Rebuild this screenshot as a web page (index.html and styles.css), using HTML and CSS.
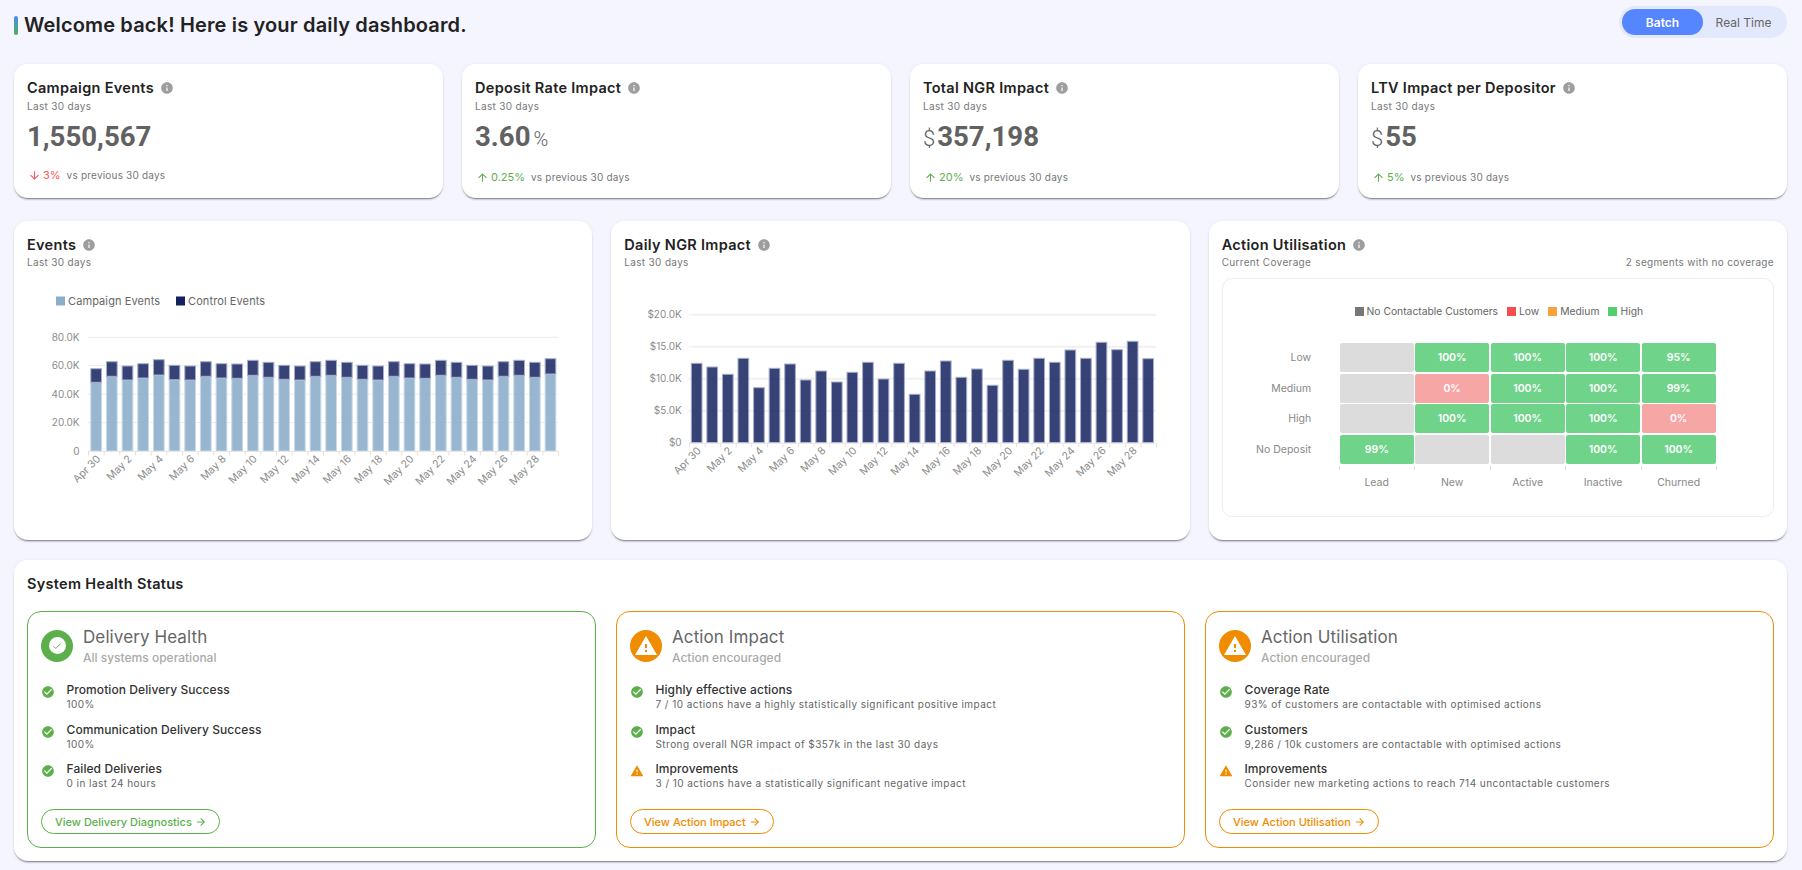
FILE: index.html
```html
<!DOCTYPE html>
<html lang="en">
<head>
<meta charset="utf-8">
<title>Dashboard</title>
<link rel="stylesheet" href="styles.css">
</head>
<body>
<svg class="defs">
  <symbol id="i-info" viewBox="0 0 24 24"><path d="M12 2C6.48 2 2 6.48 2 12s4.48 10 10 10 10-4.48 10-10S17.52 2 12 2zm1 15h-2v-6h2v6zm0-8h-2V7h2v2z"/></symbol>
  <symbol id="i-check" viewBox="0 0 24 24"><path d="M12 2C6.48 2 2 6.48 2 12s4.48 10 10 10 10-4.48 10-10S17.52 2 12 2zm-2 15l-5-5 1.41-1.41L10 14.17l7.59-7.59L19 8l-9 9z"/></symbol>
  <symbol id="i-warn" viewBox="0 0 24 24"><path d="M1 21h22L12 2 1 21zm12-3h-2v-2h2v2zm0-4h-2v-4h2v4z"/></symbol>
  <symbol id="i-up" viewBox="0 0 24 24"><path d="M4 12l1.41 1.41L11 7.83V20h2V7.83l5.58 5.59L20 12l-8-8-8 8z"/></symbol>
  <symbol id="i-down" viewBox="0 0 24 24"><path d="M20 12l-1.41-1.41L13 16.17V4h-2v12.17l-5.58-5.59L4 12l8 8 8-8z"/></symbol>
  <symbol id="i-right" viewBox="0 0 24 24"><path d="M12 4l-1.41 1.41L16.17 11H4v2h12.17l-5.58 5.59L12 20l8-8z"/></symbol>
</svg>
<main class="page">
  <header class="top">
    <h1 class="welcome"><span class="accent"></span>Welcome back! Here is your daily dashboard.</h1>
    <div class="toggle"><span class="toggle-on">Batch</span><span class="toggle-off">Real Time</span></div>
  </header>

  <section class="kpis">
    <article class="card kpi">
      <h2 class="card-title">Campaign Events <svg class="info"><use href="#i-info"/></svg></h2>
      <p class="sub">Last 30 days</p>
      <p class="value">1,550,567</p>
      <p class="delta down"><svg class="arrow"><use href="#i-down"/></svg><b>3%</b><span>vs previous 30 days</span></p>
    </article>
    <article class="card kpi">
      <h2 class="card-title">Deposit Rate Impact <svg class="info"><use href="#i-info"/></svg></h2>
      <p class="sub">Last 30 days</p>
      <p class="value">3.60<small class="unit-r">%</small></p>
      <p class="delta up"><svg class="arrow"><use href="#i-up"/></svg><b>0.25%</b><span>vs previous 30 days</span></p>
    </article>
    <article class="card kpi">
      <h2 class="card-title">Total NGR Impact <svg class="info"><use href="#i-info"/></svg></h2>
      <p class="sub">Last 30 days</p>
      <p class="value"><small class="unit-l">$</small>357,198</p>
      <p class="delta up"><svg class="arrow"><use href="#i-up"/></svg><b>20%</b><span>vs previous 30 days</span></p>
    </article>
    <article class="card kpi">
      <h2 class="card-title">LTV Impact per Depositor <svg class="info"><use href="#i-info"/></svg></h2>
      <p class="sub">Last 30 days</p>
      <p class="value"><small class="unit-l">$</small>55</p>
      <p class="delta up"><svg class="arrow"><use href="#i-up"/></svg><b>5%</b><span>vs previous 30 days</span></p>
    </article>
  </section>

  <section class="charts">
    <article class="card chart-card">
      <h2 class="card-title">Events <svg class="info"><use href="#i-info"/></svg></h2>
      <p class="sub tight">Last 30 days</p>
      <svg class="chart" viewBox="0 0 552 258">
        <rect class="sw-campaign" x="29" y="21.5" width="9" height="9"/><text class="lg" x="41" y="29.5">Campaign Events</text>
        <rect class="sw-control" x="149" y="21.5" width="9" height="9"/><text class="lg" x="161" y="29.5">Control Events</text>
        <g class="grid"><path d="M61 62.3H531M61 90.7H531M61 119.1H531M61 147.6H531"/></g>
        <g class="ylab">
          <text x="52.6" y="65.8">80.0K</text><text x="52.6" y="94.2">60.0K</text><text x="52.6" y="122.6">40.0K</text><text x="52.6" y="151.1">20.0K</text><text x="52.6" y="179.5">0</text>
        </g>
        <g class="bars campaign">
          <rect x="63.8" y="107.3" height="68.7"/><rect x="79.47" y="101.3" height="74.7"/><rect x="95.13" y="105" height="71"/><rect x="110.8" y="103" height="73"/><rect x="126.47" y="100" height="76"/><rect x="142.13" y="104.7" height="71.3"/><rect x="157.8" y="105" height="71"/><rect x="173.47" y="101.3" height="74.7"/><rect x="189.13" y="103" height="73"/><rect x="204.8" y="103.3" height="72.7"/><rect x="220.47" y="100.3" height="75.7"/><rect x="236.13" y="102.3" height="73.7"/><rect x="251.8" y="104.3" height="71.7"/><rect x="267.47" y="105" height="71"/><rect x="283.13" y="101.3" height="74.7"/><rect x="298.8" y="100.3" height="75.7"/><rect x="314.47" y="102.3" height="73.7"/><rect x="330.13" y="104.3" height="71.7"/><rect x="345.8" y="105" height="71"/><rect x="361.47" y="101.3" height="74.7"/><rect x="377.13" y="103" height="73"/><rect x="392.8" y="103.3" height="72.7"/><rect x="408.47" y="100.3" height="75.7"/><rect x="424.13" y="102.3" height="73.7"/><rect x="439.8" y="104.3" height="71.7"/><rect x="455.47" y="105" height="71"/><rect x="471.13" y="101.3" height="74.7"/><rect x="486.8" y="100.3" height="75.7"/><rect x="502.47" y="102.3" height="73.7"/><rect x="518.13" y="99" height="77"/>
        </g>
        <g class="bars control">
          <rect x="63.8" y="93.7" height="13.6"/><rect x="79.47" y="86.7" height="14.6"/><rect x="95.13" y="91" height="14"/><rect x="110.8" y="88.7" height="14.3"/><rect x="126.47" y="84.7" height="15.3"/><rect x="142.13" y="90.3" height="14.4"/><rect x="157.8" y="91" height="14"/><rect x="173.47" y="86.7" height="14.6"/><rect x="189.13" y="88.7" height="14.3"/><rect x="204.8" y="89" height="14.3"/><rect x="220.47" y="85.3" height="15"/><rect x="236.13" y="87.3" height="15"/><rect x="251.8" y="90.3" height="14"/><rect x="267.47" y="91" height="14"/><rect x="283.13" y="86.7" height="14.6"/><rect x="298.8" y="85.3" height="15"/><rect x="314.47" y="87.3" height="15"/><rect x="330.13" y="90.3" height="14"/><rect x="345.8" y="91" height="14"/><rect x="361.47" y="86.7" height="14.6"/><rect x="377.13" y="88.7" height="14.3"/><rect x="392.8" y="89" height="14.3"/><rect x="408.47" y="85.3" height="15"/><rect x="424.13" y="87.3" height="15"/><rect x="439.8" y="90.3" height="14"/><rect x="455.47" y="91" height="14"/><rect x="471.13" y="86.7" height="14.6"/><rect x="486.8" y="85.3" height="15"/><rect x="502.47" y="87.3" height="15"/><rect x="518.13" y="83.7" height="15.3"/>
        </g>
        <path class="axis" d="M61 176.5H531"/>
        <line class="ticks" x1="61" y1="178.5" x2="532" y2="178.5"/>
        <g class="xlab">
          <text transform="rotate(-45 74.1 184.5)" x="74.1" y="184.5">Apr 30</text><text transform="rotate(-45 105.5 184.5)" x="105.5" y="184.5">May 2</text><text transform="rotate(-45 136.8 184.5)" x="136.8" y="184.5">May 4</text><text transform="rotate(-45 168.1 184.5)" x="168.1" y="184.5">May 6</text><text transform="rotate(-45 199.5 184.5)" x="199.5" y="184.5">May 8</text><text transform="rotate(-45 230.8 184.5)" x="230.8" y="184.5">May 10</text><text transform="rotate(-45 262.2 184.5)" x="262.2" y="184.5">May 12</text><text transform="rotate(-45 293.5 184.5)" x="293.5" y="184.5">May 14</text><text transform="rotate(-45 324.8 184.5)" x="324.8" y="184.5">May 16</text><text transform="rotate(-45 356.2 184.5)" x="356.2" y="184.5">May 18</text><text transform="rotate(-45 387.5 184.5)" x="387.5" y="184.5">May 20</text><text transform="rotate(-45 418.8 184.5)" x="418.8" y="184.5">May 22</text><text transform="rotate(-45 450.2 184.5)" x="450.2" y="184.5">May 24</text><text transform="rotate(-45 481.5 184.5)" x="481.5" y="184.5">May 26</text><text transform="rotate(-45 512.9 184.5)" x="512.9" y="184.5">May 28</text>
        </g>
      </svg>
    </article>

    <article class="card chart-card">
      <h2 class="card-title">Daily NGR Impact <svg class="info"><use href="#i-info"/></svg></h2>
      <p class="sub tight">Last 30 days</p>
      <svg class="chart" viewBox="0 0 552 258">
        <g class="grid ngr"><path d="M65 39.7H532M65 71.7H532M65 103.7H532M65 135.7H532"/></g>
        <g class="ylab">
          <text x="57.7" y="43.2">$20.0K</text><text x="57.7" y="75.2">$15.0K</text><text x="57.7" y="107.2">$10.0K</text><text x="57.7" y="139.2">$5.0K</text><text x="57.7" y="171.2">$0</text>
        </g>
        <g class="bars control ngr">
          <rect x="67.3" y="88.3" height="79.4"/><rect x="82.87" y="92" height="75.7"/><rect x="98.44" y="99.3" height="68.4"/><rect x="114.01" y="83.3" height="84.4"/><rect x="129.58" y="112.7" height="55"/><rect x="145.15" y="93.3" height="74.4"/><rect x="160.72" y="89" height="78.7"/><rect x="176.29" y="105" height="62.7"/><rect x="191.86" y="96" height="71.7"/><rect x="207.43" y="107" height="60.7"/><rect x="223" y="97.3" height="70.4"/><rect x="238.57" y="87.3" height="80.4"/><rect x="254.14" y="104" height="63.7"/><rect x="269.71" y="88.3" height="79.4"/><rect x="285.28" y="119.3" height="48.4"/><rect x="300.85" y="96" height="71.7"/><rect x="316.42" y="86" height="81.7"/><rect x="331.99" y="102.3" height="65.4"/><rect x="347.56" y="94" height="73.7"/><rect x="363.13" y="110.3" height="57.4"/><rect x="378.7" y="85.3" height="82.4"/><rect x="394.27" y="94.3" height="73.4"/><rect x="409.84" y="83.3" height="84.4"/><rect x="425.41" y="87.3" height="80.4"/><rect x="440.98" y="75" height="92.7"/><rect x="456.55" y="83.3" height="84.4"/><rect x="472.12" y="67.3" height="100.4"/><rect x="487.69" y="74.7" height="93"/><rect x="503.26" y="66.3" height="101.4"/><rect x="518.83" y="83.7" height="84"/>
        </g>
        <path class="axis" d="M65 168.2H532"/>
        <line class="ticks" x1="65" y1="170.2" x2="533" y2="170.2"/>
        <g class="xlab">
          <text transform="rotate(-45 77.8 176.2)" x="77.8" y="176.2">Apr 30</text><text transform="rotate(-45 108.9 176.2)" x="108.9" y="176.2">May 2</text><text transform="rotate(-45 140.1 176.2)" x="140.1" y="176.2">May 4</text><text transform="rotate(-45 171.2 176.2)" x="171.2" y="176.2">May 6</text><text transform="rotate(-45 202.3 176.2)" x="202.3" y="176.2">May 8</text><text transform="rotate(-45 233.5 176.2)" x="233.5" y="176.2">May 10</text><text transform="rotate(-45 264.6 176.2)" x="264.6" y="176.2">May 12</text><text transform="rotate(-45 295.8 176.2)" x="295.8" y="176.2">May 14</text><text transform="rotate(-45 326.9 176.2)" x="326.9" y="176.2">May 16</text><text transform="rotate(-45 358 176.2)" x="358" y="176.2">May 18</text><text transform="rotate(-45 389.2 176.2)" x="389.2" y="176.2">May 20</text><text transform="rotate(-45 420.3 176.2)" x="420.3" y="176.2">May 22</text><text transform="rotate(-45 451.5 176.2)" x="451.5" y="176.2">May 24</text><text transform="rotate(-45 482.6 176.2)" x="482.6" y="176.2">May 26</text><text transform="rotate(-45 513.7 176.2)" x="513.7" y="176.2">May 28</text>
        </g>
      </svg>
    </article>

    <article class="card chart-card">
      <h2 class="card-title">Action Utilisation <svg class="info"><use href="#i-info"/></svg></h2>
      <div class="sub-row"><p class="sub tight">Current Coverage</p><p class="sub tight">2 segments with no coverage</p></div>
      <div class="heat-panel">
        <div class="heat-legend">
          <span class="lg-item"><i class="sw sw-none"></i>No Contactable Customers</span>
          <span class="lg-item"><i class="sw sw-low"></i>Low</span>
          <span class="lg-item"><i class="sw sw-med"></i>Medium</span>
          <span class="lg-item"><i class="sw sw-high"></i>High</span>
        </div>
        <div class="heat">
          <span class="row-l">Low</span><i class="cell none"></i><b class="cell high">100%</b><b class="cell high">100%</b><b class="cell high">100%</b><b class="cell high">95%</b>
          <span class="row-l">Medium</span><i class="cell none"></i><b class="cell low">0%</b><b class="cell high">100%</b><b class="cell high">100%</b><b class="cell high">99%</b>
          <span class="row-l">High</span><i class="cell none"></i><b class="cell high">100%</b><b class="cell high">100%</b><b class="cell high">100%</b><b class="cell low">0%</b>
          <span class="row-l">No Deposit</span><b class="cell high">99%</b><i class="cell none"></i><i class="cell none"></i><b class="cell high">100%</b><b class="cell high">100%</b>
          <span></span><i class="tick"></i><i class="tick"></i><i class="tick"></i><i class="tick"></i><i class="tick end"></i>
          <span></span><span class="col-l">Lead</span><span class="col-l">New</span><span class="col-l">Active</span><span class="col-l">Inactive</span><span class="col-l">Churned</span>
        </div>
      </div>
    </article>
  </section>

  <section class="card health">
    <h2 class="card-title">System Health Status</h2>
    <div class="health-grid">
      <article class="status good">
        <div class="status-head">
          <span class="badge"><i class="badge-dot"><svg class="badge-check" viewBox="0 0 24 24"><path d="M5 12.5l4.5 4.5L19 7.5"/></svg></i></span>
          <div><h3 class="status-title">Delivery Health</h3><p class="status-sub">All systems operational</p></div>
        </div>
        <ul class="items">
          <li class="item"><svg class="item-icon ok"><use href="#i-check"/></svg><div><p class="item-title">Promotion Delivery Success</p><p class="item-sub">100%</p></div></li>
          <li class="item"><svg class="item-icon ok"><use href="#i-check"/></svg><div><p class="item-title">Communication Delivery Success</p><p class="item-sub">100%</p></div></li>
          <li class="item"><svg class="item-icon ok"><use href="#i-check"/></svg><div><p class="item-title">Failed Deliveries</p><p class="item-sub">0 in last 24 hours</p></div></li>
        </ul>
        <a class="btn">View Delivery Diagnostics<svg class="btn-arrow"><use href="#i-right"/></svg></a>
      </article>
      <article class="status warn">
        <div class="status-head">
          <span class="badge"><svg class="badge-warn"><use href="#i-warn"/></svg></span>
          <div><h3 class="status-title">Action Impact</h3><p class="status-sub">Action encouraged</p></div>
        </div>
        <ul class="items">
          <li class="item"><svg class="item-icon ok"><use href="#i-check"/></svg><div><p class="item-title">Highly effective actions</p><p class="item-sub">7 / 10 actions have a highly statistically significant positive impact</p></div></li>
          <li class="item"><svg class="item-icon ok"><use href="#i-check"/></svg><div><p class="item-title">Impact</p><p class="item-sub">Strong overall NGR impact of $357k in the last 30 days</p></div></li>
          <li class="item"><svg class="item-icon bad"><use href="#i-warn"/></svg><div><p class="item-title">Improvements</p><p class="item-sub">3 / 10 actions have a statistically significant negative impact</p></div></li>
        </ul>
        <a class="btn">View Action Impact<svg class="btn-arrow"><use href="#i-right"/></svg></a>
      </article>
      <article class="status warn">
        <div class="status-head">
          <span class="badge"><svg class="badge-warn"><use href="#i-warn"/></svg></span>
          <div><h3 class="status-title">Action Utilisation</h3><p class="status-sub">Action encouraged</p></div>
        </div>
        <ul class="items">
          <li class="item"><svg class="item-icon ok"><use href="#i-check"/></svg><div><p class="item-title">Coverage Rate</p><p class="item-sub">93% of customers are contactable with optimised actions</p></div></li>
          <li class="item"><svg class="item-icon ok"><use href="#i-check"/></svg><div><p class="item-title">Customers</p><p class="item-sub">9,286 / 10k customers are contactable with optimised actions</p></div></li>
          <li class="item"><svg class="item-icon bad"><use href="#i-warn"/></svg><div><p class="item-title">Improvements</p><p class="item-sub">Consider new marketing actions to reach 714 uncontactable customers</p></div></li>
        </ul>
        <a class="btn">View Action Utilisation<svg class="btn-arrow"><use href="#i-right"/></svg></a>
      </article>
    </div>
  </section>
</main>
</body>
</html>
```
FILE: styles.css
```css
* { box-sizing: border-box; }
html, body { margin: 0; height: 100%; }
body {
  background: #f4f5ff;
  font-family: Inter, "Liberation Sans", sans-serif;
  color: #222;
  overflow: hidden;
}
h1, h2, h3, p, ul { margin: 0; padding: 0; }
ul { list-style: none; }
.defs { display: none; }

.page { padding: 6px 15px 0 14px; }

.top { display: flex; justify-content: space-between; align-items: flex-start; height: 32px; margin-bottom: 26px; }
.welcome { display: flex; align-items: center; gap: 6px; margin-top: 7px; font-size: 20px; line-height: 24px; font-weight: 600; letter-spacing: .15px; color: #222; }
.accent { width: 4px; height: 19px; border-radius: 2px; background: linear-gradient(#4a8df5, #4caf50); }
.toggle { display: flex; align-items: center; width: 168px; height: 32px; padding: 3px; border-radius: 16px; background: #e3e9fc; font-size: 12px; }
.toggle-on { display: flex; align-items: center; justify-content: center; width: 81px; height: 26px; border-radius: 13px; background: #5585ff; color: #fff; font-weight: 600; }
.toggle-off { flex: 1; text-align: center; color: #666; }

.card { background: #fff; border-radius: 14px; box-shadow: 0 2px 2px -1px rgba(30, 30, 40, .6), 0 0 4px rgba(0, 0, 0, .05); }
.card-title { display: flex; align-items: center; gap: 6px; height: 20px; font-size: 14.5px; line-height: 20px; font-weight: 600; letter-spacing: .3px; color: #222; }
.info { width: 14px; height: 14px; fill: #9e9e9e; }
.sub { margin-top: 2px; font-size: 10px; line-height: 13px; letter-spacing: .33px; color: #777; }
.sub.tight { margin-top: 1px; }

.kpis { display: grid; grid-template-columns: repeat(4, 1fr); gap: 19px; margin-bottom: 23px; }
.kpi { height: 134px; padding: 14px 13px; }
.value { display: flex; align-items: baseline; margin-top: 7px; font-family: Roboto, sans-serif; font-size: 27.6px; line-height: 34px; font-weight: 700; color: #616161; }
.unit-r { margin-left: 3px; font-size: 20px; font-weight: 300; }
.unit-l { margin-right: 2px; font-size: 22px; font-weight: 300; }
.delta { display: flex; align-items: center; margin-top: 14px; height: 14px; font-size: 10px; letter-spacing: .2px; color: #777; }
.delta b { font-size: 11px; font-weight: 400; margin: 0 6px 0 2px; letter-spacing: 0; }
.arrow { width: 13px; height: 13px; margin-left: 1px; }
.up, .up b { fill: #5cb04c; }
.up b { color: #5cb04c; }
.down { fill: #f55; }
.down b { color: #f55; }

.charts { display: grid; grid-template-columns: repeat(3, 1fr); gap: 19px; margin-bottom: 20px; }
.chart-card { height: 319px; padding: 14px 13px 0; }
.chart { display: block; width: 552px; height: 258px; margin-top: 6px; font-family: Inter, sans-serif; }
.lg { font-size: 11px; letter-spacing: .1px; fill: #666; }
.sw-campaign { fill: #8aadc9; }
.sw-control { fill: #14225e; }
.grid path { stroke: #ececec; stroke-width: 1; fill: none; }
.grid.ngr path { stroke: #f1f1f1; stroke-width: 2; }
.ylab text { font-size: 10px; fill: #8c8c8c; text-anchor: end; }
.xlab text { font-size: 10.5px; fill: #8c8c8c; text-anchor: end; }
.bars rect { width: 10.7px; stroke-width: 1; }
.campaign rect { fill: #86a9c7; fill-opacity: .85; stroke: #c9d9e6; }
.control rect { fill: #14225e; fill-opacity: .85; stroke: #a6aec9; }
.axis { stroke: #e6e6e6; stroke-width: 1; fill: none; }
.ticks { stroke: #e0e0e0; stroke-width: 4; stroke-dasharray: 1 14.67; }
.ngr + .axis + .ticks { stroke-dasharray: 1 14.57; }

.sub-row { display: flex; justify-content: space-between; }
.heat-panel { height: 239px; margin-top: 9px; padding-top: 25px; border: 1px solid #eeeeee; border-radius: 10px; }
.heat-legend { display: flex; justify-content: center; gap: 9px; height: 14px; padding-left: 2px; font-size: 10.3px; line-height: 14px; color: #666; }
.lg-item { display: flex; align-items: center; gap: 3px; }
.sw { width: 9px; height: 9px; }
.sw-none { background: #777; }
.sw-low { background: #f44f4f; }
.sw-med { background: #f9a03f; }
.sw-high { background: #53ce6f; }
.heat { display: grid; grid-template-columns: 115.5px repeat(5, 73.9px); grid-template-rows: repeat(4, 29px) 4px 22px; column-gap: 1.6px; row-gap: 1.7px; margin-top: 25px; font-size: 10.5px; color: #888; }
.row-l { display: flex; align-items: center; justify-content: flex-end; padding-right: 27px; }
.cell { display: flex; align-items: center; justify-content: center; border-radius: 2px; color: #fff; font-size: 10.5px; font-weight: 600; font-style: normal; }
.cell.none { background: #dcdcdc; }
.cell.high { background: #6fd38a; }
.cell.low { background: #f7a6a6; }
.tick { border-left: 1px solid #dddddd; margin-left: -1px; }
.tick.end { border-right: 1px solid #dddddd; margin-right: -1px; }
.col-l { display: flex; align-items: center; justify-content: center; }

.health { height: 301px; padding: 14px 13px; }
.health-grid { display: grid; grid-template-columns: repeat(3, 1fr); gap: 20px; margin-top: 17px; }
.status { height: 237px; padding: 13px 13px; border-radius: 14px; border: 1.5px solid; }
.good { border-color: #5cb04c; color: #5cb04c; }
.warn { border-color: #f08c00; color: #f08c00; }
.status-head { display: flex; align-items: center; gap: 10px; height: 41px; }
.badge { display: flex; align-items: center; justify-content: center; width: 32px; height: 32px; border-radius: 50%; background: currentColor; }
.badge-dot { display: flex; align-items: center; justify-content: center; width: 17px; height: 17px; border-radius: 50%; background: #fff; }
.badge-check { width: 12px; height: 12px; fill: none; stroke: #5cb04c; stroke-width: 2; }
.badge-warn { width: 24px; height: 24px; fill: #fff; }
.status-title { font-size: 17px; line-height: 22px; font-weight: 400; letter-spacing: .1px; color: #666; }
.status-sub { margin-top: 2px; font-size: 12px; line-height: 16px; font-weight: 500; color: #aaa; }
.items { display: flex; flex-direction: column; gap: 10.5px; margin-top: 16px; }
.item { display: flex; gap: 11.5px; height: 29px; }
.item-icon { flex: none; width: 14px; height: 14px; margin-top: 3px; }
.ok { fill: #5cb04c; }
.bad { fill: #f08c00; }
.item-title { font-size: 12px; line-height: 16px; font-weight: 450; letter-spacing: .08px; color: #333; }
.item-sub { font-size: 10px; line-height: 13px; letter-spacing: .45px; color: #666; }
.btn { display: inline-flex; align-items: center; gap: 3px; height: 25px; margin-top: 19px; padding: 0 12px 0 13px; border: 1.2px solid currentColor; border-radius: 13px; font-size: 11px; font-weight: 500; color: inherit; fill: currentColor; }
.btn-arrow { width: 12px; height: 12px; }
```
